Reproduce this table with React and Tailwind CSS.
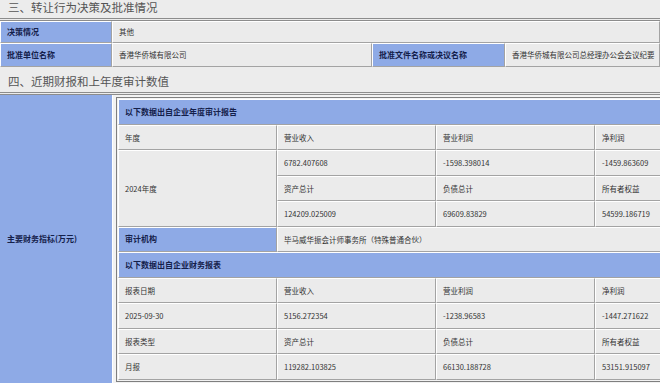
// 转让公告 - 决策批准及财务数据表
const label = 'bg-[#8eaae6] font-bold text-[8px] text-[#14204a]';
const data = 'bg-[#ebebeb] text-[7.5px] text-[#333]';

function Cell({ children, className = '' }) {
  return (
    <div
      className={`flex items-center pl-[6px] whitespace-nowrap overflow-hidden border border-t-white border-l-white border-r-[#a3a3a3] border-b-[#a3a3a3] ${className}`}
    >
      {children}
    </div>
  );
}

function SectionTitle({ children, className = '' }) {
  return (
    <div
      className={`flex items-center pl-[8px] bg-[#ececec] text-[11.5px] text-[#555] border-b-[3px] border-double border-[#8c8c8c] ${className}`}
    >
      {children}
    </div>
  );
}

const auditRows = [
  ['营业收入', '营业利润', '净利润'],
  ['6782.407608', '-1598.398014', '-1459.863609'],
  ['资产总计', '负债总计', '所有者权益'],
  ['124209.025009', '69609.83829', '54599.186719'],
];

const reportRows = [
  ['报表日期', '营业收入', '营业利润', '净利润'],
  ['2025-09-30', '5156.272354', '-1238.96583', '-1447.271622'],
  ['报表类型', '资产总计', '负债总计', '所有者权益'],
  ['月报', '119282.103825', '66130.188728', '53151.915097'],
];

export default function App() {
  return (
    <div className="w-[660px] h-[383px] overflow-hidden bg-[#ececec] font-['Noto_Sans_CJK_SC',sans-serif]">
      {/* 三、转让行为决策及批准情况 */}
      <SectionTitle className="h-[21px] pb-[3px]">三、转让行为决策及批准情况</SectionTitle>

      <div className="flex h-[22px]">
        <Cell className={`w-[112px] ${label}`}>决策情况</Cell>
        <Cell className={`flex-1 ${data}`}>其他</Cell>
      </div>
      <div className="flex h-[24px]">
        <Cell className={`w-[112px] ${label}`}>批准单位名称</Cell>
        <Cell className={`w-[260px] ${data}`}>香港华侨城有限公司</Cell>
        <Cell className={`w-[133px] ${label}`}>批准文件名称或决议名称</Cell>
        <Cell className={`flex-1 ${data}`}>香港华侨城有限公司总经理办公会会议纪要</Cell>
      </div>

      {/* 四、近期财报和上年度审计数值 */}
      <SectionTitle className="h-[28px] pt-[4px]">四、近期财报和上年度审计数值</SectionTitle>

      <div className="flex h-[288px]">
        <div className={`w-[112px] flex items-center pl-[7px] ${label}`}>主要财务指标(万元)</div>
        <div className="flex-1 bg-[#f2f2f2] pl-[3px] pt-[2px] border-l border-white overflow-hidden">
          <div className="w-[660px] border border-[#7f7f7f] p-[1px] bg-[#f2f2f2]">
            <div className="grid grid-cols-[159px_159px_159px_159px] auto-rows-[25.5px]">
              <Cell className={`col-span-4 ${label}`}>以下数据出自企业年度审计报告</Cell>

              <Cell className={data}>年度</Cell>
              {auditRows[0].map((t) => (
                <Cell key={t} className={data}>{t}</Cell>
              ))}

              <Cell className={`row-span-3 ${data}`}>2024年度</Cell>
              {auditRows.slice(1).flat().map((t) => (
                <Cell key={t} className={data}>{t}</Cell>
              ))}

              <Cell className={label}>审计机构</Cell>
              <Cell className={`col-span-3 ${data}`}>毕马威华振会计师事务所（特殊普通合伙）</Cell>

              <Cell className={`col-span-4 ${label}`}>以下数据出自企业财务报表</Cell>

              {reportRows.flat().map((t, i) => (
                <Cell key={i} className={data}>{t}</Cell>
              ))}
            </div>
          </div>
        </div>
      </div>
    </div>
  );
}
